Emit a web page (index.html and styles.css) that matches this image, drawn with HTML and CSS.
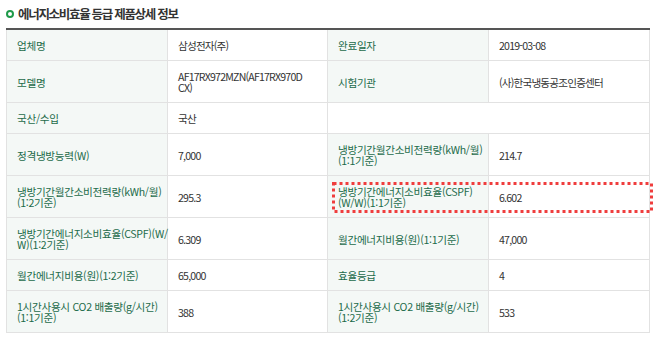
FILE: index.html
```html
<!DOCTYPE html>
<html lang="ko">
<head>
<meta charset="utf-8">
<link rel="stylesheet" href="styles.css">
</head>
<body>
<div class="wrap">
  <h2 class="title"><span class="ring"></span>에너지소비효율 등급 제품상세 정보</h2>
  <table class="spec">
    <colgroup><col class="c1"><col class="c2"><col class="c3"><col class="c4"></colgroup>
    <tr><th>업체명</th><td>삼성전자(주)</td><th>완료일자</th><td>2019-03-08</td></tr>
    <tr><th>모델명</th><td>AF17RX972MZN(AF17RX970D<br>CX)</td><th>시험기관</th><td>(사)한국냉동공조인증센터</td></tr>
    <tr><th>국산/수입</th><td>국산</td><td class="blank" colspan="2"></td></tr>
    <tr><th>정격냉방능력(W)</th><td>7,000</td><th>냉방기간월간소비전력량(kWh/월)<br>(1:1기준)</th><td>214.7</td></tr>
    <tr><th>냉방기간월간소비전력량(kWh/월)<br>(1:2기준)</th><td>295.3</td><th>냉방기간에너지소비효율(CSPF)<br>(W/W)(1:1기준)</th><td>6.602</td></tr>
    <tr><th>냉방기간에너지소비효율(CSPF)(W/<br>W)(1:2기준)</th><td>6.309</td><th>월간에너지비용(원)(1:1기준)</th><td>47,000</td></tr>
    <tr><th>월간에너지비용(원)(1:2기준)</th><td>65,000</td><th>효율등급</th><td>4</td></tr>
    <tr><th>1시간사용시 CO2 배출량(g/시간)<br>(1:1기준)</th><td>388</td><th>1시간사용시 CO2 배출량(g/시간)<br>(1:2기준)</th><td>533</td></tr>
  </table>
  <svg class="mark" width="321" height="31" viewBox="0 0 321 31"><rect x="1.5" y="1.5" width="318" height="28" fill="none" stroke="#ef3d3d" stroke-width="3" stroke-dasharray="3 3"/></svg>
</div>
</body>
</html>
```
FILE: styles.css
```css
html, body { margin: 0; padding: 0; background: #fff; }
body { font-family: "Noto Sans CJK KR", "Noto Sans", sans-serif; color: #333; }
.wrap { position: relative; width: 658px; height: 337px; }
.title {
  margin: 0;
  padding: 6px 0 0 6px;
  height: 22px;
  box-sizing: border-box;
  display: flex;
  align-items: center;
  font-size: 12.5px;
  font-weight: bold;
  letter-spacing: -1.3px;
  color: #333;
  line-height: 14px;
}
.ring {
  width: 8px; height: 8px;
  border: 2px solid #1f9a4a;
  border-radius: 50%;
  box-sizing: border-box;
  margin: 0 4px 0 0;
}
.spec {
  margin: 6px 0 0 6px;
  width: 643px;
  border-collapse: collapse;
  table-layout: fixed;
  border-top: 2px solid #555;
  font-size: 10.6px;
  line-height: 11px;
}
.c1 { width: 161px; } .c2 { width: 160px; } .c3 { width: 161px; } .c4 { width: 161px; }
.spec th, .spec td {
  border: 1px solid #e2e2e2;
  padding: 10px 10px 9px 10px;
  text-align: left;
  vertical-align: middle;
  white-space: nowrap;
}
.spec th { background: #f4f8f6; color: #1c6b4a; font-weight: normal; letter-spacing: -0.3px; }
.spec td { color: #333; letter-spacing: -0.8px; }
.spec td.blank { background: #fff; }
.mark { position: absolute; left: 332px; top: 182px; }
```
